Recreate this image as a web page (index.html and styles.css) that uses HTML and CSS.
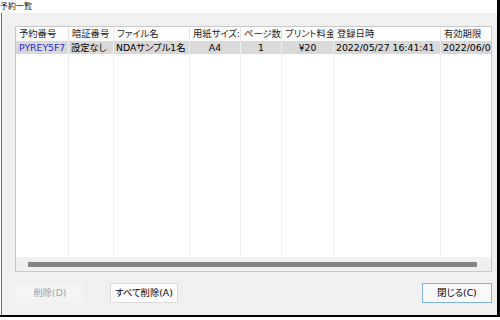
FILE: index.html
```html
<!DOCTYPE html>
<html lang="ja">
<head>
<meta charset="utf-8">
<link rel="stylesheet" href="styles.css">
</head>
<body>
<div class="frame">
  <div class="titlebar">予約一覧</div>
  <div class="window">
    <div class="list">
      <div class="header">
        <div class="cell c1">予約番号</div>
        <div class="cell c2">暗証番号</div>
        <div class="cell c3">ファイル名</div>
        <div class="cell c4">用紙サイズ:</div>
        <div class="cell c5">ページ数</div>
        <div class="cell c6">プリント料金</div>
        <div class="cell c7">登録日時</div>
        <div class="cell c8">有効期限</div>
      </div>
      <div class="row selected">
        <div class="cell c1 id">PYREY5F7</div>
        <div class="cell c2">設定なし</div>
        <div class="cell c3">NDAサンプル1名</div>
        <div class="cell c4 center">A4</div>
        <div class="cell c5 center">1</div>
        <div class="cell c6 center">¥20</div>
        <div class="cell c7">2022/05/27 16:41:41</div>
        <div class="cell c8">2022/06/03 16:41:41</div>
      </div>
      <div class="empty">
        <div class="gcol c1"></div>
        <div class="gcol c2"></div>
        <div class="gcol c3"></div>
        <div class="gcol c4"></div>
        <div class="gcol c5"></div>
        <div class="gcol c6"></div>
        <div class="gcol c7"></div>
        <div class="gcol c8"></div>
      </div>
      <div class="hscroll"><div class="thumb"></div></div>
    </div>
    <div class="buttons">
      <button class="btn disabled">削除(D)</button>
      <button class="btn all">すべて削除(A)</button>
      <span class="spacer"></span>
      <button class="btn close">閉じる(C)</button>
    </div>
  </div>
</div>
</body>
</html>
```

FILE: styles.css
```css
html, body {
  margin: 0;
  padding: 0;
}
body {
  width: 500px;
  height: 320px;
  background: #ffffff;
  font-family: "DejaVu Sans", "Noto Sans CJK JP", sans-serif;
  font-feature-settings: "palt";
  color: #000;
  overflow: hidden;
}
.frame {
  width: 500px;
  height: 317px;
  box-sizing: border-box;
  border-right: 3px solid #000;
  border-bottom: 2px solid #000;
  display: flex;
  flex-direction: column;
}
.titlebar {
  height: 13px;
  font-size: 8px;
  line-height: 13px;
  background: #ffffff;
  color: #111;
  white-space: nowrap;
}
.window {
  flex: 1;
  background: #f0f0f0;
  border-left: 1px solid #6a6a6a;
  margin-left: 1px;
  padding: 13px 5px 0 13px;
  display: flex;
  flex-direction: column;
}
.list {
  width: 477px;
  height: 246px;
  box-sizing: border-box;
  border: 1px solid #c8c8c8;
  background: #fff;
  display: flex;
  flex-direction: column;
  overflow: hidden;
}
.header, .row, .empty {
  display: flex;
  flex: none;
}
.header {
  height: 14px;
  background: #fff;
}
.header .cell {
  border-right: 1px solid #e5e5e5;
  padding-left: 3px;
  color: #1a1a1a;
}
.cell {
  box-sizing: border-box;
  flex: none;
  font-size: 9.3px;
  line-height: 14px;
  white-space: nowrap;
  overflow: hidden;
  padding-left: 2px;
}
.row {
  height: 13px;
  background: #d9d9d9;
}
.row .cell {
  line-height: 13px;
  border-right: 1px solid #f0f0f0;
}
.center {
  text-align: center;
  padding-left: 0;
}
.id {
  color: #2b2bd6;
  padding-left: 3px;
}
.c1 { width: 53px; }
.c2 { width: 45px; }
.c3 { width: 76px; }
.c4 { width: 51px; }
.c5 { width: 41px; }
.c6 { width: 52px; }
.c7 { width: 107px; }
.c8 { width: 60px; }
.empty {
  flex: 1;
}
.gcol {
  box-sizing: border-box;
  flex: none;
  border-right: 1px solid #f0f0f0;
}
.hscroll {
  height: 14px;
  flex: none;
  background: #f0f0f0;
  display: flex;
  align-items: center;
  padding-left: 12px;
}
.thumb {
  width: 449px;
  height: 5px;
  background: #858585;
}
.buttons {
  display: flex;
  margin-top: 11px;
  padding-left: 1px;
}
.btn {
  height: 20px;
  width: 68px;
  box-sizing: border-box;
  font-family: "DejaVu Sans", "Noto Sans CJK JP", sans-serif;
  font-feature-settings: "palt";
  font-size: 9.3px;
  white-space: nowrap;
  padding: 0;
  line-height: 18px;
  border: 1px solid #e6e6e6;
  background: #fdfdfd;
  color: #000;
}
.btn.disabled {
  background: #f4f4f4;
  border-color: #f4f4f4;
  color: #a0a0a0;
}
.btn.all {
  margin-left: 26px;
  border-color: #dadada;
  background: #fff;
}
.spacer {
  flex: 1;
}
.btn.close {
  width: 70px;
  border-color: #7eb4ea;
  background: #f9f9f9;
}
```
